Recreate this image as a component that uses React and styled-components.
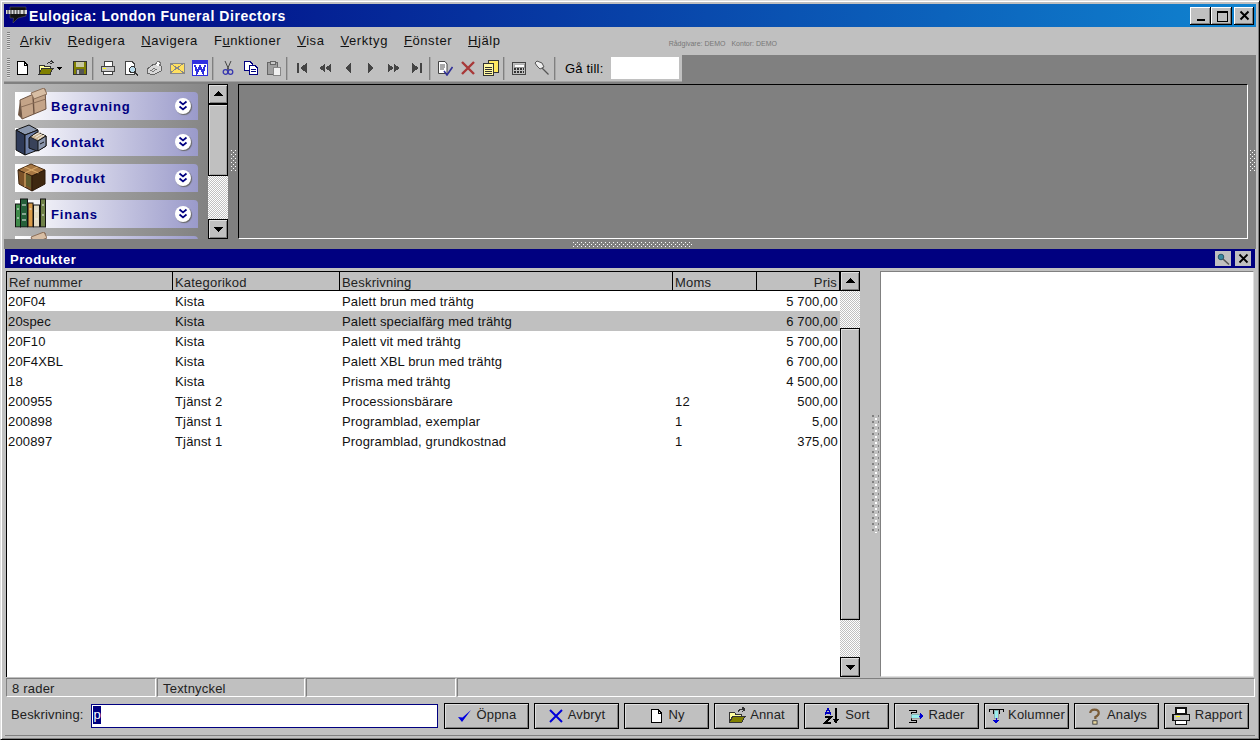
import React from "react";
import styled, { createGlobalStyle } from "styled-components";

const Global = createGlobalStyle`
  html, body { margin: 0; padding: 0; background: #c0c0c0; overflow: hidden; }
  * { box-sizing: border-box; }
  body { font-family: "Liberation Sans", Arial, sans-serif; font-size: 13px; color: #000; }
`;

const dither = `repeating-conic-gradient(#c0c0c0 0 25%, #fff 0 50%) 0 0 / 2px 2px`;

const Frame = styled.div`
  width: 1260px; height: 740px; overflow: hidden;
  display: flex; flex-direction: column;
  background: #c0c0c0;
  border-style: solid; border-width: 1px; border-color: #dfdfdf #000 #000 #dfdfdf;
  padding: 3px;
  box-shadow: inset 1px 1px 0 #fff, inset -1px -1px 0 #808080;
`;
const TitleBar = styled.div`
  height: 23px; flex: none; display: flex; align-items: center;
  background: linear-gradient(90deg, #000080, #1084d0);
  padding-left: 1px;
`;
const Logo = styled.svg`width: 23px; height: 23px; flex: none;`;
const TitleText = styled.div`
  margin-left: 1px; color: #fff; font-weight: 700; font-size: 14px; letter-spacing: 0.55px; flex: 1; white-space: nowrap;
`;
const WinBtn = styled.div`
  width: ${p => p.$w || 21}px; height: 18px; margin-right: ${p => p.$mr || 0}px;
  background: #c0c0c0; display: flex; align-items: center; justify-content: center;
  box-shadow: inset -1px -1px 0 #000, inset 1px 1px 0 #fff, inset -2px -2px 0 #808080;
`;
const MenuBar = styled.div`
  height: 28px; flex: none; display: flex; align-items: center; padding-left: 3px; white-space: nowrap;
`;
const Grip = styled.div`
  width: 3px; height: ${p => p.$h}px; flex: none; margin-right: ${p => p.$mr || 0}px;
  background: repeating-linear-gradient(180deg, #808080 0 1px, #dcdcdc 1px 2px);
`;
const MenuItem = styled.span`
  font-size: 13px; letter-spacing: 0.58px; color: #111; margin-right: ${p => p.$mr}px; line-height: 28px;
`;
const Tiny = styled.span`
  font-size: 7px; color: #777; margin-left: ${p => p.$ml}px; position: relative; top: 2px;
`;
const ToolRow = styled.div`height: 28px; flex: none; display: flex; background: #808080;`;
const Toolbar = styled.div`
  width: 678px; height: 27px; background: #c0c0c0; display: flex; align-items: center; padding-left: 3px;
  border-bottom: 1px solid #a0a0a0;
`;
const ToolBtn = styled.div`
  width: ${p => p.$w || 23}px; height: 22px; flex: none; display: flex; align-items: center; justify-content: center; gap: 2px;
`;
const Sep = styled.div`width: 2px; height: 23px; flex: none; background: #808080; margin: 0 2px 0 1px; border-right: 1px solid #a8a8a8;`;
const GoLabel = styled.span`margin-left: 7px; font-size: 13px; letter-spacing: 0.2px; white-space: nowrap;`;
const GoInput = styled.div`width: 68px; height: 22px; background: #fff; margin-left: 8px; flex: none;`;
const Upper = styled.div`height: 156px; flex: none; display: flex; background: #808080;`;
const NavPanel = styled.div`
  width: 204px; flex: none; height: 155px; margin-top: 1px; overflow: hidden; padding: 8px 0 0 11px;
  display: flex; flex-direction: column; gap: 8px;
  background: linear-gradient(100deg, #bdbdbd, #808080);
`;
const NavItem = styled.div`
  flex: none; width: 183px; height: 28px; display: flex; align-items: center; border-radius: 0 4px 0 0;
  background: linear-gradient(90deg, #fff, #9a9aca);
  padding-right: 7px;
`;
const NavIcon = styled.svg`width: 32px; height: 32px; flex: none; margin-top: -4px;`;
const NavLabel = styled.span`
  flex: 1; margin-left: 4px; color: #000080; font-weight: 700; font-size: 13px; letter-spacing: 0.8px;
`;
const Round = styled.div`
  width: 16px; height: 16px; border-radius: 50%; background: #fff; display: flex; align-items: center; justify-content: center;
  box-shadow: 1px 1px 1px #666;
`;
const Scroll = styled.div`
  width: 20px; flex: none; display: flex; flex-direction: column; background: ${dither};
  height: ${p => p.$h}px; margin-top: ${p => p.$mt || 0}px;
`;
const ScrollBtn = styled.div`
  height: 20px; flex: none; background: #c0c0c0; display: flex; align-items: center; justify-content: center;
  border: 1px solid #000; box-shadow: inset 1px 1px 0 #dfdfdf, inset -1px -1px 0 #808080;
`;
const Thumb = styled.div`
  height: ${p => p.$h}px; margin-top: ${p => p.$mt}px; margin-bottom: auto; flex: none; background: #c0c0c0; border: 1px solid #000;
  box-shadow: inset 1px 1px 0 #dfdfdf, inset -1px -1px 0 #a0a0a0;
`;
const VSplit = styled.div`
  width: ${p => p.$w}px; flex: none; display: flex; align-items: center; justify-content: center; background: #808080;
`;
const Sash = styled.div`
  width: 20px; flex: none; background: #c0c0c0; padding: 144px 0 0 12px;
`;
const Dots = styled.div`
  width: ${p => p.$w}px; height: ${p => p.$h}px;
  background:
    conic-gradient(at 1px 1px, transparent 0 75%, #fff 0) 0 0 / 4px 4px,
    conic-gradient(at 1px 1px, transparent 0 75%, #fff 0) 2px 2px / 4px 4px;
`;
const SashDots = styled.div`
  width: 7px; height: 118px;
  background:
    conic-gradient(at 2px 2px, transparent 0 75%, #808080 0) 0 0 / 6px 6px,
    conic-gradient(at 2px 2px, transparent 0 75%, #fff 0) 3px 3px / 6px 6px;
`;
const Mdi = styled.div`
  flex: 1; margin-top: 1px; height: 155px; background: #808080;
  border-style: solid; border-width: 1px; border-color: #000 #fff #fff #000;
`;
const HSplit = styled.div`height: 10px; flex: none; background: #808080; display: flex; justify-content: center; align-items: center; padding-left: 5px;`;
const Child = styled.div`flex: 1; display: flex; flex-direction: column; padding: 0 1px; min-height: 0;`;
const Caption = styled.div`
  height: 19px; flex: none; background: #000080; display: flex; align-items: center; padding: 1px 4px 0 5px;
  color: #fff; font-weight: 700; font-size: 13px; letter-spacing: 0.55px;
`;
const CaptionText = styled.span`flex: 1;`;
const CapBtn = styled.div`
  width: 16px; height: 15px; background: #c0c0c0; margin: -1px 0 0 4px; display: flex; align-items: center; justify-content: center;
`;
const Body = styled.div`height: 406px; flex: none; margin-top: 3px; display: flex; padding-left: 1px;`;
const GridBox = styled.div`width: 854px; flex: none; display: flex; background: #fff; border-left: 1px solid #000;`;
const GridMain = styled.div`flex: 1; min-width: 0; display: flex; flex-direction: column;`;
const Cols = styled.div`
  display: grid; grid-template-columns: 166px 167px 333px 84px 83px; height: 20px; flex: none;
  background: ${p => p.$sel ? "#c0c0c0" : "transparent"}; overflow: hidden;
`;
const Head = styled.div`
  height: 20px; background: #c0c0c0; border-style: solid; border-color: #000; border-width: 1px 1px 1px 0;
  overflow: hidden; padding: 3px 2px 0 2px; font-size: 13px; line-height: 15px; color: #222; letter-spacing: 0.2px;
  text-align: ${p => p.$right ? "right" : "left"};
`;
const Cell = styled.div`
  line-height: 20px; padding: 1px 2px 0 ${p => p.$right ? 0 : p.$first ? 1 : 2}px; white-space: nowrap; overflow: hidden; color: #111; font-size: 13px; letter-spacing: 0.15px;
  text-align: ${p => p.$right ? "right" : "left"};
`;
const Right = styled.div`
  width: 374px; flex: none; margin-right: 1px; background: #fff; border-style: solid; border-width: 1px; border-color: #808080 #dfdfdf #dfdfdf #808080;
`;
const Status = styled.div`height: 19px; flex: none; margin-top: 1px; display: flex; padding-left: 1px; gap: 1px;`;
const StatusCell = styled.div`
  width: ${p => p.$w ? p.$w + "px" : "auto"}; flex: ${p => p.$w ? "none" : 1}; overflow: hidden;
  border-style: solid; border-width: 1px; border-color: #808080 #fff #fff #808080;
  padding: 2px 0 0 5px; line-height: 15px; font-size: 13px; letter-spacing: 0.2px; color: #222;
`;
const Form = styled.div`height: 39px; flex: none; display: flex; align-items: flex-start; padding: 6px 0 0 6px; border-bottom: 1px solid #808080;`;
const FormLabel = styled.span`width: 80px; flex: none; line-height: 23px; font-size: 13px; color: #222; letter-spacing: 0.15px;`;
const FormInput = styled.div`
  width: 347px; height: 24px; flex: none; margin: 1px 6px 0 0; background: #fff; border: 1px solid #000080; padding: 1px;
`;
const Sel = styled.span`
  display: inline-block; height: 18px; width: 8px; background: #000080; color: #fff; line-height: 17px; font-size: 13px; text-align: center;
`;
const Btn = styled.div`
  width: 85px; height: 26px; flex: none; margin-right: 5px; padding-bottom: 3px; border: 1px solid #000; background: #c0c0c0;
  display: flex; align-items: center; justify-content: center; gap: 4px; font-size: 13px; color: #222; white-space: nowrap; letter-spacing: 0.15px;
  box-shadow: inset 1px 1px 0 #dfdfdf, inset -1px -1px 0 #808080;
  svg { margin-top: 3px; }
`;
const Ico = styled.svg`width: ${p => p.$s || 16}px; height: ${p => p.$s || 16}px; flex: none; shape-rendering: crispEdges;`;
const SmoothIco = styled.svg`width: ${p => p.$s || 16}px; height: ${p => p.$s || 16}px; flex: none;`;

const Tri = ({ dir }) => (
  <Ico $s={10} viewBox="0 0 10 10">
    <path fill="#000" d={dir === "up" ? "M5 2 L10 7 H0 Z" : "M0 3 H10 L5 8 Z"} />
  </Ico>
);

const I = {
  newDoc: <Ico viewBox="0 0 16 16"><path d="M3.5 1.5 H10 L13.5 5 V14.5 H3.5 Z" fill="#fff" stroke="#000" /><path d="M10 1.5 V5 H13.5" fill="none" stroke="#000" /></Ico>,
  open: <Ico viewBox="0 0 16 16"><path d="M1 5 H6 L7 6.5 H12 V14 H1 Z" fill="#ffff9c" stroke="#333" /><path d="M1 14 L4 8.5 H15 L12 14 Z" fill="#808000" stroke="#333" /><path d="M9 4 Q11 1 14 2 M13 0 L15 2.5 L12.5 4" fill="none" stroke="#333" /></Ico>,
  save: <Ico viewBox="0 0 16 16"><rect x="1.5" y="1.5" width="13" height="13" fill="#808000" stroke="#333" /><rect x="4" y="2" width="8" height="5" fill="#c8c8a0" /><rect x="4" y="9" width="8" height="5" fill="#555" /><rect x="5" y="10" width="2" height="4" fill="#c0c0c0" /></Ico>,
  print: <Ico viewBox="0 0 16 16"><path d="M4 1.5 H12 V6 H4 Z" fill="#fff" stroke="#444" /><path d="M1.5 6.5 H14.5 V11.5 H1.5 Z" fill="#c8c8c8" stroke="#444" /><rect x="3" y="8" width="3" height="1" fill="#ff0" /><path d="M3.5 11.5 H12.5 V14.5 H3.5 Z" fill="#fff" stroke="#444" /></Ico>,
  preview: <Ico viewBox="0 0 16 16"><path d="M2.5 1.5 H9 L11.5 4 V14.5 H2.5 Z" fill="#fff" stroke="#444" /><circle cx="9.5" cy="9.5" r="3" fill="#bde" stroke="#333" /><path d="M11.5 12 L15 15" stroke="#333" strokeWidth="1.5" /></Ico>,
  fax: <Ico viewBox="0 0 16 16"><path d="M1 9 L8 4 L15 6 V11 L7 15 L1 13 Z" fill="#d8d8d8" stroke="#666" /><path d="M9 5 L12 1 L15 3 L13 6" fill="#fff" stroke="#777" /><path d="M4 11 L9 8 M6 12 L11 9" stroke="#777" /></Ico>,
  mail: <Ico viewBox="0 0 16 16"><rect x="1" y="3" width="14" height="10" fill="#ffe060" stroke="#888" /><path d="M1 3 L15 13 M15 3 L1 13" stroke="#888" /></Ico>,
  word: <Ico viewBox="0 0 16 16"><rect x="0.5" y="0.5" width="15" height="15" fill="#fff" stroke="#3030e0" /><rect x="1" y="1" width="14" height="3" fill="#3030e0" /><path d="M3 5 L5 13 L8 6 L11 13 L13 5" fill="none" stroke="#3030e0" strokeWidth="2" /></Ico>,
  cut: <SmoothIco viewBox="0 0 16 16"><path d="M5 1 L9 10 M11 1 L7 10" stroke="#444" fill="none" /><circle cx="5.5" cy="12" r="2.3" fill="none" stroke="#3838b0" strokeWidth="1.3" /><circle cx="10.5" cy="12" r="2.3" fill="none" stroke="#3838b0" strokeWidth="1.3" /></SmoothIco>,
  copy: <Ico viewBox="0 0 16 16"><path d="M1.5 1.5 H7 L9.5 4 V10.5 H1.5 Z" fill="#fff" stroke="#000080" /><path d="M6.5 5.5 H12 L14.5 8 V14.5 H6.5 Z" fill="#fff" stroke="#000080" /><path d="M8 9 H13 M8 11 H13" stroke="#000080" /></Ico>,
  paste: <Ico viewBox="0 0 16 16"><rect x="1.5" y="2.5" width="10" height="12" fill="#a0a0a0" stroke="#666" /><rect x="4" y="1" width="5" height="3" fill="#c8c8c8" stroke="#666" /><path d="M7.5 7.5 H14.5 V15 H7.5 Z" fill="#f0f0f0" stroke="#888" /></Ico>,
  first: <Ico viewBox="0 0 16 16"><path fill="#444" d="M3 3 H5 V13 H3 Z M13 3 V13 L6 8 Z" /></Ico>,
  prev: <Ico viewBox="0 0 16 16"><path fill="#444" d="M8 4 V12 L2 8 Z M14 4 V12 L8 8 Z" /></Ico>,
  back: <Ico viewBox="0 0 16 16"><path fill="#444" d="M11 3 V13 L5 8 Z" /></Ico>,
  fwd: <Ico viewBox="0 0 16 16"><path fill="#444" d="M5 3 V13 L11 8 Z" /></Ico>,
  next: <Ico viewBox="0 0 16 16"><path fill="#444" d="M2 4 L8 8 L2 12 Z M8 4 L14 8 L8 12 Z" /></Ico>,
  last: <Ico viewBox="0 0 16 16"><path fill="#444" d="M3 3 L10 8 L3 13 Z M11 3 H13 V13 H11 Z" /></Ico>,
  edit: <SmoothIco viewBox="0 0 16 16"><path d="M1.5 1.5 H8 L10 4 V13.5 H1.5 Z" fill="#fff" stroke="#444" /><path d="M3 5 H8 M3 7 H8 M3 9 H7" stroke="#555" /><path d="M7 11 L10 15 L15.5 7" fill="none" stroke="#303098" strokeWidth="1.6" /></SmoothIco>,
  del: <SmoothIco viewBox="0 0 16 16"><path d="M2 2 L14 14 M14 2 L2 14" stroke="#a83838" strokeWidth="2.4" /></SmoothIco>,
  paste2: <Ico viewBox="0 0 16 16"><path d="M5.5 0.5 H15.5 V12.5 H5.5 Z" fill="#ffe860" stroke="#333" /><path d="M0.5 3.5 H10.5 V15.5 H0.5 Z" fill="#fff8a0" stroke="#333" /><path d="M2 7 H9 M2 9 H9 M2 11 H9 M2 13 H9" stroke="#333" /></Ico>,
  calc: <Ico viewBox="0 0 16 16"><rect x="1.5" y="2.5" width="13" height="12" fill="#c0c0c0" stroke="#444" /><rect x="3" y="4" width="10" height="3" fill="#fff" stroke="#666" strokeWidth="0.5" /><path d="M3 9 H5 M6 9 H8 M9 9 H11 M12 9 H13 M3 12 H5 M6 12 H8 M9 12 H11 M12 12 H13" stroke="#333" strokeWidth="1.5" /></Ico>,
  pin: <SmoothIco viewBox="0 0 16 16"><path d="M3 1 L8 3 L10 7 L6 9 L3 6 L1 3 Z" fill="#eee" stroke="#555" /><path d="M8 8 L14.5 14.5" stroke="#555" strokeWidth="1.3" /></SmoothIco>,
  check: <SmoothIco viewBox="0 0 16 16"><path d="M1 9 L5 14 L14 2 L5.5 9.5 Z" fill="#0000e0" /></SmoothIco>,
  cross: <SmoothIco viewBox="0 0 16 16"><path d="M2 2 L14 14 M14 2 L2 14" stroke="#0000d8" strokeWidth="2" /></SmoothIco>,
  sort: <Ico $s={18} viewBox="0 0 18 18"><path d="M5 1 L2 8 M5 1 L8 8 M3 6 H7" stroke="#0000c0" strokeWidth="1.2" fill="none" /><path d="M2 10 H8 L2 16 H8" stroke="#000" strokeWidth="1.5" fill="none" /><path d="M13 1 V13" stroke="#000" strokeWidth="1.5" /><path d="M10 12 H16 L13 17 Z" fill="#000" /></Ico>,
  rows: <Ico viewBox="0 0 16 16"><path d="M1 2 H8 V4 H3 V12 H8 V14 H1" fill="none" stroke="#000" /><rect x="3" y="6" width="8" height="4" fill="#9ee" stroke="#777" strokeWidth="0.5" /><path d="M11 8 H13" stroke="#0000d0" /><path d="M12 5 L16 8 L12 11 Z" fill="#0000d0" /></Ico>,
  cols: <Ico viewBox="0 0 16 16"><path d="M1 4 V1 H15 V4 M5 2 V6 M11 2 V6" fill="none" stroke="#000" /><rect x="6" y="2" width="4" height="8" fill="#9ee" stroke="#777" strokeWidth="0.5" /><path d="M8 10 V13" stroke="#0000d0" /><path d="M5 12 H11 L8 16 Z" fill="#0000d0" /></Ico>,
  help: <SmoothIco $s={17} viewBox="0 0 20 20"><path d="M5 6 Q5 2 10 2 Q15 2 15 6 Q15 9 11 10.5 V13" fill="none" stroke="#7a5c38" strokeWidth="2.6" /><rect x="8" y="15" width="5" height="4" fill="#e8d8a0" stroke="#333" /></SmoothIco>,
  folder: <Ico $s={18} viewBox="0 0 16 16"><path d="M1 5 H6 L7 6.5 H12 V14 H1 Z" fill="#ffffa0" stroke="#333" /><path d="M1 14 L4 8.5 H15 L12 14 Z" fill="#808000" stroke="#333" /><path d="M9 4 Q11 1 14 2 M13 0 L15 2.5 L12.5 4" fill="none" stroke="#333" /></Ico>,
  rprint: <Ico $s={20} viewBox="0 0 16 16"><path d="M4 1.5 H12 V6 H4 Z" fill="#fff" stroke="#111" /><path d="M1.5 6.5 H14.5 V11.5 H1.5 Z" fill="#c0c0c0" stroke="#111" /><rect x="4" y="8" width="3" height="1" fill="#ff0" /><path d="M3.5 11.5 H12.5 V14.5 H3.5 Z" fill="#fff" stroke="#111" /></Ico>,
  key: <SmoothIco $s={14} viewBox="0 0 14 14"><circle cx="5" cy="5" r="2.8" fill="#3a8aa0" stroke="#27566a" /><path d="M7 7 L13 12.5" stroke="#555" strokeWidth="1.6" /></SmoothIco>,
};

const Chevrons = () => (
  <SmoothIco $s={12} viewBox="0 0 12 12">
    <path d="M2.5 1.5 L6 4.5 L9.5 1.5 M2.5 6.5 L6 9.5 L9.5 6.5" fill="none" stroke="#000080" strokeWidth="1.7" />
  </SmoothIco>
);

const Coffin = (
  <NavIcon viewBox="0 0 32 32">
    <path d="M5 12 L30 1 L31 21 L7 31 Z" fill="#c4a488" stroke="#6e5442" />
    <path d="M5 12 L3 27 L7 31 Z" fill="#6e5644" />
    <path d="M18 7 L19 26" stroke="#6e5442" strokeWidth="1.4" />
    <path d="M6 19 L31 11" stroke="#8b6e58" />
    <path d="M16 5 L29 0 L32 6 L19 11 Z" fill="#d8bea4" stroke="#8b6e58" />
  </NavIcon>
);
const Cabinet = (
  <NavIcon viewBox="0 0 32 32">
    <path d="M1 6 L14 1 L23 6 L10 11 Z" fill="#8a97ae" stroke="#111" />
    <path d="M1 6 L10 11 V31 L1 26 Z" fill="#2e3a58" stroke="#111" />
    <path d="M10 11 L23 6 V26 L10 31 Z" fill="#6e80a8" stroke="#111" />
    <path d="M14 14 L22 8 L31 12 L31 22 L22 27 L14 24 Z" fill="#39425a" stroke="#111" />
    <path d="M15 13 L23 8 L31 12 L23 17 Z" fill="#c9b392" stroke="#222" />
    <path d="M18 12 L26 7.5 M20.5 13.5 L28 9 M23 15 L30 10.5" stroke="#f4eee2" />
    <path d="M23 17 L31 12 V22 L23 27 Z" fill="#8b96ac" stroke="#111" />
    <path d="M25 20 L29 18" stroke="#111" />
  </NavIcon>
);
const Box = (
  <NavIcon viewBox="0 0 32 32">
    <path d="M3 10 L16 4 L30 10 L17 16 Z" fill="#a87844" stroke="#4a2e12" />
    <path d="M3 10 L17 16 V31 L4 24 Z" fill="#7c5228" stroke="#3a2410" />
    <path d="M17 16 L30 10 V24 L17 31 Z" fill="#3e2810" stroke="#2a1808" />
    <path d="M9.5 7 L23.5 13 M22.5 7 L10 13 M10 13 V27" stroke="#d8a868" fill="none" strokeWidth="1.2" />
    <path d="M11 14 L16 16.5 V28 L11 25.5 Z" fill="#5f5a2c" />
  </NavIcon>
);
const Books = (
  <NavIcon viewBox="0 0 32 32">
    <rect x="0.5" y="8" width="5" height="23" fill="#3f8a4a" stroke="#111" />
    <rect x="5.5" y="3" width="7" height="28" fill="#25603a" stroke="#111" />
    <rect x="13" y="7" width="5" height="24" fill="#d89a48" stroke="#111" />
    <rect x="18.5" y="9" width="6" height="22" fill="#e4dcc4" stroke="#111" />
    <rect x="25.5" y="3" width="5" height="28" fill="#6e8048" stroke="#111" />
    <path d="M2 13 H4 M7 9 H11 M2 22 H4 M7 18 H11 M7 24 H11 M14.5 13 H16.5 M20 15 H23 M20 23 H23 M27 9 H29 M27 19 H29" stroke="#eee" />
  </NavIcon>
);

const navItems = [
  ["Begravning", Coffin], ["Kontakt", Cabinet], ["Produkt", Box], ["Finans", Books], ["", Coffin],
];
const rows = [
  ["20F04", "Kista", "Palett brun med trähtg", "", "5 700,00"],
  ["20spec", "Kista", "Palett specialfärg med trähtg", "", "6 700,00"],
  ["20F10", "Kista", "Palett vit med trähtg", "", "5 700,00"],
  ["20F4XBL", "Kista", "Palett XBL brun med trähtg", "", "6 700,00"],
  ["18", "Kista", "Prisma med trähtg", "", "4 500,00"],
  ["200955", "Tjänst 2", "Processionsbärare", "12", "500,00"],
  ["200898", "Tjänst 1", "Programblad, exemplar", "1", "5,00"],
  ["200897", "Tjänst 1", "Programblad, grundkostnad", "1", "375,00"],
];
const menu = [
  ["A", "rkiv", 16], ["R", "edigera", 16], ["N", "avigera", 16], ["F", "unktioner", 16, "u"], ["V", "isa", 16],
  ["V", "erktyg", 16], ["F", "önster", 16], ["H", "jälp", 0],
];
const actions = [
  [I.check, "Öppna"], [I.cross, "Avbryt"], [I.newDoc, "Ny"], [I.folder, "Annat"], [I.sort, "Sort"],
  [I.rows, "Rader"], [I.cols, "Kolumner"], [I.help, "Analys"], [I.rprint, "Rapport"],
];

export default function App() {
  return (
    <Frame>
      <Global />
      <TitleBar>
        <Logo viewBox="0 0 23 23">
          <path d="M5 3 H21 V12 L13 14 L8 19 L8.5 14 H5 Z" fill="#111" stroke="#666" strokeWidth="0.5" />
          <rect x="1" y="6" width="21" height="4" fill="#d8d8d8" />
          <path d="M3 6 V10 M6 6 V10 M9 6 V10 M12 6 V10 M15 6 V10 M19 6 V10" stroke="#222" />
        </Logo>
        <TitleText>Eulogica: London Funeral Directors</TitleText>
        <WinBtn>
          <Ico $s={12} viewBox="0 0 12 12"><rect x="2" y="9" width="8" height="2" fill="#000" /></Ico>
        </WinBtn>
        <WinBtn $mr={2}>
          <Ico $s={12} viewBox="0 0 12 12"><rect x="1" y="1" width="10" height="10" fill="none" stroke="#000" /><rect x="1" y="1" width="10" height="2" fill="#000" /></Ico>
        </WinBtn>
        <WinBtn $mr={2} $w={20}>
          <SmoothIco $s={11} viewBox="0 0 11 11"><path d="M1.5 1.5 L9.5 9.5 M9.5 1.5 L1.5 9.5" stroke="#000" strokeWidth="2" /></SmoothIco>
        </WinBtn>
      </TitleBar>

      <MenuBar>
        <Grip $h={18} $mr={10} />
        {menu.map(([a, b, mr, kind], i) => (
          <MenuItem key={i} $mr={mr}>
            {kind === "u" ? <>F<u>u</u>nktioner</> : <><u>{a}</u>{b}</>}
          </MenuItem>
        ))}
        <Tiny $ml={168}>Rådgivare: DEMO</Tiny>
        <Tiny $ml={6}>Kontor: DEMO</Tiny>
      </MenuBar>

      <ToolRow>
        <Toolbar>
          <Grip $h={20} />
          <ToolBtn>{I.newDoc}</ToolBtn>
          <ToolBtn $w={35}>{I.open}<Ico $s={7} viewBox="0 0 7 7"><path d="M0 2 H6 L3 5 Z" fill="#000" /></Ico></ToolBtn>
          <ToolBtn>{I.save}</ToolBtn>
          <Sep />
          <ToolBtn>{I.print}</ToolBtn>
          <ToolBtn>{I.preview}</ToolBtn>
          <ToolBtn>{I.fax}</ToolBtn>
          <ToolBtn>{I.mail}</ToolBtn>
          <ToolBtn>{I.word}</ToolBtn>
          <Sep />
          <ToolBtn>{I.cut}</ToolBtn>
          <ToolBtn>{I.copy}</ToolBtn>
          <ToolBtn>{I.paste}</ToolBtn>
          <Sep />
          <ToolBtn>{I.first}</ToolBtn>
          <ToolBtn>{I.prev}</ToolBtn>
          <ToolBtn>{I.back}</ToolBtn>
          <ToolBtn>{I.fwd}</ToolBtn>
          <ToolBtn>{I.next}</ToolBtn>
          <ToolBtn>{I.last}</ToolBtn>
          <Sep />
          <ToolBtn>{I.edit}</ToolBtn>
          <ToolBtn>{I.del}</ToolBtn>
          <ToolBtn>{I.paste2}</ToolBtn>
          <Sep />
          <ToolBtn>{I.calc}</ToolBtn>
          <ToolBtn>{I.pin}</ToolBtn>
          <Sep />
          <GoLabel>Gå till:</GoLabel>
          <GoInput />
        </Toolbar>
      </ToolRow>

      <Upper>
        <NavPanel>
          {navItems.map(([label, icon], i) => (
            <NavItem key={i}>
              {icon}
              <NavLabel>{label}</NavLabel>
              {label && <Round><Chevrons /></Round>}
            </NavItem>
          ))}
        </NavPanel>
        <Scroll $h={155} $mt={1}>
          <ScrollBtn><Tri dir="up" /></ScrollBtn>
          <Thumb $h={72} $mt={0} />
          <ScrollBtn><Tri dir="down" /></ScrollBtn>
        </Scroll>
        <VSplit $w={10}><Dots $w={5} $h={22} /></VSplit>
        <Mdi />
        <VSplit $w={8}><Dots $w={5} $h={22} /></VSplit>
      </Upper>
      <HSplit><Dots $w={120} $h={5} /></HSplit>

      <Child>
        <Caption>
          <CaptionText>Produkter</CaptionText>
          <CapBtn>{I.key}</CapBtn>
          <CapBtn>
            <SmoothIco $s={11} viewBox="0 0 11 11"><path d="M1.5 1.5 L9.5 9.5 M9.5 1.5 L1.5 9.5" stroke="#000" strokeWidth="1.8" /></SmoothIco>
          </CapBtn>
        </Caption>
        <Body>
          <GridBox>
            <GridMain>
              <Cols>
                <Head>Ref nummer</Head>
                <Head>Kategorikod</Head>
                <Head>Beskrivning</Head>
                <Head>Moms</Head>
                <Head $right>Pris</Head>
              </Cols>
              {rows.map((r, i) => (
                <Cols key={i} $sel={i === 1}>
                  <Cell $first>{r[0]}</Cell>
                  <Cell>{r[1]}</Cell>
                  <Cell>{r[2]}</Cell>
                  <Cell>{r[3]}</Cell>
                  <Cell $right>{r[4]}</Cell>
                </Cols>
              ))}
            </GridMain>
            <Scroll $h={406}>
              <ScrollBtn><Tri dir="up" /></ScrollBtn>
              <Thumb $h={292} $mt={37} />
              <ScrollBtn><Tri dir="down" /></ScrollBtn>
            </Scroll>
          </GridBox>
          <Sash><SashDots /></Sash>
          <Right />
        </Body>
        <Status>
          <StatusCell $w={150}>8 rader</StatusCell>
          <StatusCell $w={148}>Textnyckel</StatusCell>
          <StatusCell $w={150} />
          <StatusCell />
        </Status>
        <Form>
          <FormLabel>Beskrivning:</FormLabel>
          <FormInput><Sel>p</Sel></FormInput>
          {actions.map(([icon, label]) => (
            <Btn key={label}>{icon}{label}</Btn>
          ))}
        </Form>
      </Child>
    </Frame>
  );
}
